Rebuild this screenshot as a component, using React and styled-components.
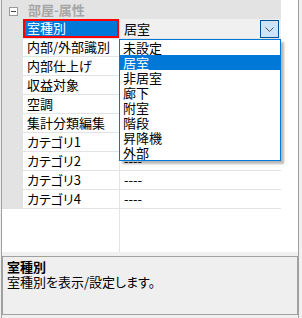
import React from "react";
import styled, { createGlobalStyle } from "styled-components";

const GlobalStyle = createGlobalStyle`
  html, body {
    margin: 0;
    background: #f0f0f0;
  }
  body {
    font-family: "Noto Sans CJK JP", "Noto Sans", sans-serif;
    font-size: 13px;
    font-feature-settings: "palt";
    color: #000;
  }
`;

const StyledPage = styled.div`
  width: 302px;
  height: 318px;
  padding-left: 1px;
  box-sizing: border-box;
  background: #f0f0f0;
  overflow: hidden;
`;

const StyledShell = styled.div`
  width: 298px;
  height: 318px;
  box-sizing: border-box;
  border-left: 1px solid #a0a0a0;
  border-right: 1px solid #a0a0a0;
  display: flex;
  flex-direction: column;
`;

const StyledGrid = styled.div`
  height: 252px;
  background: #fff;
  display: flex;
  flex-direction: column;
`;

const StyledTable = styled.div`
  width: 279px;
  flex: 1;
  display: flex;
  flex-direction: column;
`;

const StyledHeader = styled.div`
  height: 19px;
  display: flex;
  align-items: center;
  background: #e3e3e3;
  flex-shrink: 0;
`;

const StyledExpander = styled.span`
  width: 9px;
  height: 9px;
  box-sizing: border-box;
  margin: 3px 10px 0 7px;
  border: 1px solid #9a9a9a;
  background: #fff;
  display: flex;
  align-items: center;
  justify-content: center;
  &::after {
    content: "";
    width: 5px;
    height: 1px;
    background: #444;
  }
`;

const StyledCategory = styled.span`
  font-weight: bold;
  color: #a6a6a6;
  line-height: 19px;
`;

const StyledRow = styled.div`
  height: 19px;
  display: grid;
  grid-template-columns: 21px 97px 161px;
  flex-shrink: 0;
`;

const StyledGutter = styled.div`
  background: #e3e3e3;
`;

const StyledName = styled.div`
  box-sizing: border-box;
  border-right: 1px solid #e3e3e3;
  border-bottom: 1px solid #e3e3e3;
  padding-left: 4px;
  line-height: 18px;
  white-space: nowrap;
  overflow: hidden;
  background: ${(p) => (p.$selected ? "#0078d7" : "transparent")};
  color: ${(p) => (p.$selected ? "#fff" : "#000")};
  box-shadow: ${(p) => (p.$selected ? "inset 0 0 0 2px #ff0000" : "none")};
`;

const StyledValue = styled.div`
  position: relative;
  box-sizing: border-box;
  border-bottom: 1px solid #e3e3e3;
  padding-left: 4px;
  line-height: 18px;
  white-space: nowrap;
  background: ${(p) => (p.$editing ? "#f0f0f0" : "transparent")};
  display: flex;
  align-items: center;
  justify-content: space-between;
`;

const StyledDropButton = styled.div`
  width: 19px;
  height: 18px;
  box-sizing: border-box;
  margin-right: 2px;
  margin-top: 1px;
  border: 1px solid #005499;
  background: #cce4f7;
  display: flex;
  align-items: center;
  justify-content: center;
`;

const StyledList = styled.ul`
  position: absolute;
  left: -1px;
  top: 20px;
  width: 162px;
  margin: 0;
  padding: 0;
  list-style: none;
  box-sizing: border-box;
  border: 1px solid #0078d7;
  background: #fff;
  box-shadow: 3px 3px 2px rgba(0, 0, 0, 0.28);
  z-index: 2;
`;

const StyledItem = styled.li`
  height: 15px;
  line-height: 15px;
  padding-left: 3px;
  background: ${(p) => (p.$active ? "#0078d7" : "#fff")};
  color: ${(p) => (p.$active ? "#fff" : "#000")};
`;

const StyledFiller = styled.div`
  flex: 1;
  display: grid;
  grid-template-columns: 21px 97px;
  & > div:last-child {
    border-right: 1px solid #e3e3e3;
  }
`;

const StyledDesc = styled.div`
  margin-top: 4px;
  height: 59px;
  box-sizing: border-box;
  border: 1px solid #a0a0a0;
  background: #efefef;
  padding: 2px 4px;
  line-height: 15px;
`;

const StyledDescTitle = styled.div`
  font-weight: bold;
`;

const rows = [
  { name: "内部/外部識別", value: "" },
  { name: "内部仕上げ", value: "" },
  { name: "収益対象", value: "" },
  { name: "空調", value: "" },
  { name: "集計分類編集", value: "" },
  { name: "カテゴリ1", value: "" },
  { name: "カテゴリ2", value: "----" },
  { name: "カテゴリ3", value: "----" },
  { name: "カテゴリ4", value: "----" },
];

const options = ["未設定", "居室", "非居室", "廊下", "附室", "階段", "昇降機", "外部"];

const App = () => {
  return (
    <>
      <GlobalStyle />
      <StyledPage>
        <StyledShell>
          <StyledGrid>
            <StyledTable>
              <StyledHeader>
                <StyledExpander />
                <StyledCategory>部屋-属性</StyledCategory>
              </StyledHeader>
              <StyledRow>
                <StyledGutter />
                <StyledName $selected>室種別</StyledName>
                <StyledValue $editing>
                  <span>居室</span>
                  <StyledDropButton>
                    <svg width="9" height="5" viewBox="0 0 9 5">
                      <path d="M0.5 0.5 L4.5 4.5 L8.5 0.5" fill="none" stroke="#555" strokeWidth="1" />
                    </svg>
                  </StyledDropButton>
                  <StyledList>
                    {options.map((o) => (
                      <StyledItem key={o} $active={o === "居室"}>
                        {o}
                      </StyledItem>
                    ))}
                  </StyledList>
                </StyledValue>
              </StyledRow>
              {rows.map((r) => (
                <StyledRow key={r.name}>
                  <StyledGutter />
                  <StyledName>{r.name}</StyledName>
                  <StyledValue>{r.value}</StyledValue>
                </StyledRow>
              ))}
              <StyledFiller>
                <div />
                <div />
              </StyledFiller>
            </StyledTable>
          </StyledGrid>
          <StyledDesc>
            <StyledDescTitle>室種別</StyledDescTitle>
            <div>室種別を表示/設定します。</div>
          </StyledDesc>
        </StyledShell>
      </StyledPage>
    </>
  );
};

export default App;
